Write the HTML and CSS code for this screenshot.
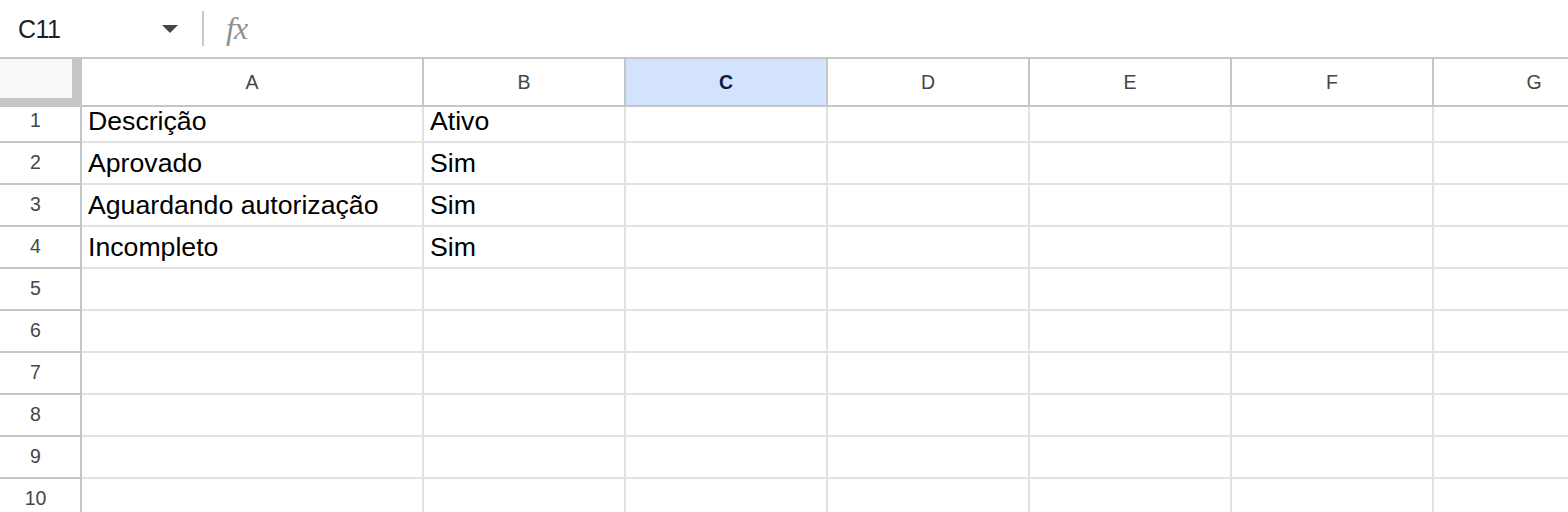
FILE: index.html
```html
<!DOCTYPE html>
<html lang="pt">
<head>
<meta charset="utf-8">
<title>Planilha</title>
<link rel="stylesheet" href="styles.css">
</head>
<body>
<div class="toolbar">
  <div class="namebox"><span class="cellref">C11</span><span class="caret"></span></div>
  <div class="sep"></div>
  <span class="fx">fx</span>
</div>
<div class="sheet">
  <div class="corner"></div>
  <div class="ch">A</div>
  <div class="ch">B</div>
  <div class="ch sel">C</div>
  <div class="ch">D</div>
  <div class="ch">E</div>
  <div class="ch">F</div>
  <div class="ch">G</div>

  <div class="rh">1</div><div class="c">Descrição</div><div class="c">Ativo</div><div class="c"></div><div class="c"></div><div class="c"></div><div class="c"></div><div class="c"></div>
  <div class="rh">2</div><div class="c">Aprovado</div><div class="c">Sim</div><div class="c"></div><div class="c"></div><div class="c"></div><div class="c"></div><div class="c"></div>
  <div class="rh">3</div><div class="c">Aguardando autorização</div><div class="c">Sim</div><div class="c"></div><div class="c"></div><div class="c"></div><div class="c"></div><div class="c"></div>
  <div class="rh">4</div><div class="c">Incompleto</div><div class="c">Sim</div><div class="c"></div><div class="c"></div><div class="c"></div><div class="c"></div><div class="c"></div>
  <div class="rh">5</div><div class="c"></div><div class="c"></div><div class="c"></div><div class="c"></div><div class="c"></div><div class="c"></div><div class="c"></div>
  <div class="rh">6</div><div class="c"></div><div class="c"></div><div class="c"></div><div class="c"></div><div class="c"></div><div class="c"></div><div class="c"></div>
  <div class="rh">7</div><div class="c"></div><div class="c"></div><div class="c"></div><div class="c"></div><div class="c"></div><div class="c"></div><div class="c"></div>
  <div class="rh">8</div><div class="c"></div><div class="c"></div><div class="c"></div><div class="c"></div><div class="c"></div><div class="c"></div><div class="c"></div>
  <div class="rh">9</div><div class="c"></div><div class="c"></div><div class="c"></div><div class="c"></div><div class="c"></div><div class="c"></div><div class="c"></div>
  <div class="rh">10</div><div class="c"></div><div class="c"></div><div class="c"></div><div class="c"></div><div class="c"></div><div class="c"></div><div class="c"></div>
</div>
</body>
</html>
```

FILE: styles.css
```css
html, body {
  margin: 0;
  padding: 0;
  background: #ffffff;
  width: 1568px;
  height: 512px;
  overflow: hidden;
  font-family: "Liberation Sans", Arial, sans-serif;
}

.toolbar {
  height: 57px;
  border-bottom: 2px solid #c7c7c7;
  display: flex;
  align-items: center;
  box-sizing: content-box;
}

.namebox {
  width: 160px;
  padding-left: 18px;
  display: flex;
  align-items: center;
}

.cellref {
  font-size: 25px;
  line-height: 30px;
  color: #1f1f1f;
  letter-spacing: -0.5px;
}

.caret {
  margin-left: auto;
  width: 0;
  height: 0;
  border-left: 8px solid transparent;
  border-right: 8px solid transparent;
  border-top: 8px solid #444746;
}

.sep {
  width: 2px;
  height: 35px;
  background: #c7c7c7;
  margin-left: 24px;
}

.fx {
  margin-left: 22px;
  font-family: "Liberation Serif", "Times New Roman", serif;
  font-style: italic;
  font-size: 32px;
  line-height: 30px;
  color: #909090;
  letter-spacing: -1px;
  padding-bottom: 2px;
}

.sheet {
  display: grid;
  grid-template-columns: 82px 342px repeat(6, 202px);
  grid-template-rows: 48px 36px repeat(9, 42px);
}

.corner {
  background: #f8f9fa;
  border-right: 10px solid #c4c7c5;
  border-bottom: 9px solid #c4c7c5;
  box-sizing: border-box;
}

.ch {
  border-right: 2px solid #c4c7c5;
  border-bottom: 2px solid #c4c7c5;
  box-sizing: border-box;
  display: flex;
  align-items: center;
  justify-content: center;
  font-size: 19.5px;
  color: #444746;
  padding-top: 1px;
}

.ch.sel {
  background: #d3e3fd;
  color: #0b1d46;
  font-weight: bold;
}

.rh {
  border-right: 2px solid #c4c7c5;
  border-bottom: 2px solid #c4c7c5;
  box-sizing: border-box;
  display: flex;
  align-items: flex-end;
  justify-content: center;
  font-size: 19.5px;
  line-height: 20px;
  padding: 0 9px 11px 0;
  color: #444746;
}

.c {
  border-right: 2px solid #e1e1e1;
  border-bottom: 2px solid #e1e1e1;
  box-sizing: border-box;
  display: flex;
  align-items: flex-end;
  font-size: 26.67px;
  line-height: 30px;
  padding: 0 0 5px 6px;
  color: #000000;
  white-space: nowrap;
  overflow: hidden;
}
```
